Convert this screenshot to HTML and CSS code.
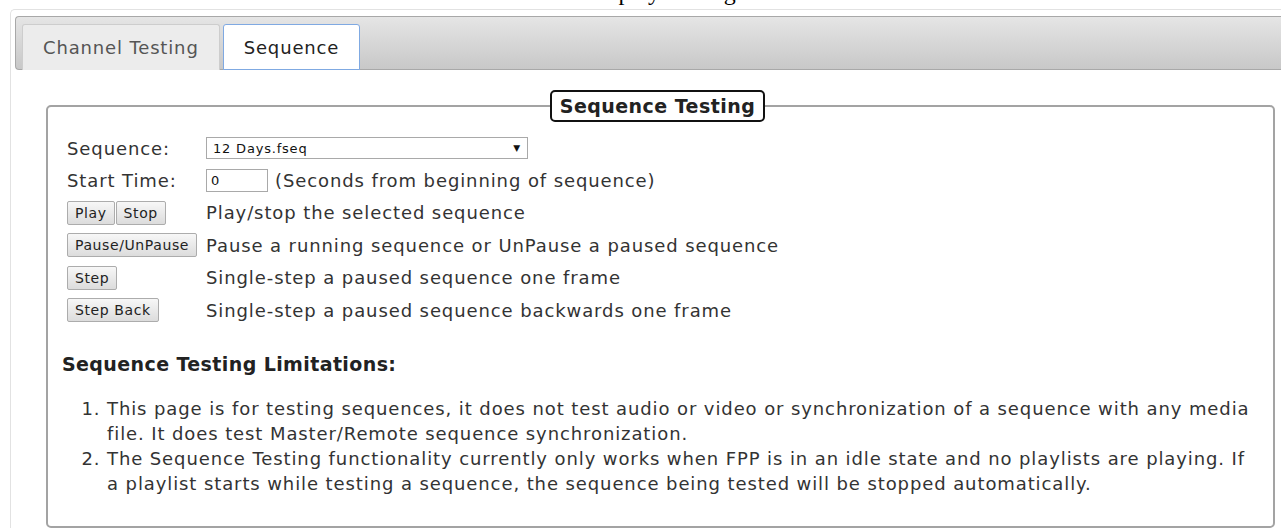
FILE: index.html
```html
<!DOCTYPE html>
<html lang="en">
<head>
  <meta charset="UTF-8" />
  <title>Display Testing</title>
  <link rel="stylesheet" href="styles.css">
</head>
<body>
  <div class="page-title"><span>Display Testing</span></div>

  <div class="tabs-wrap">
    <div class="tab-bar">
      <div class="tab">Channel Testing</div>
      <div class="tab active">Sequence</div>
    </div>

    <div class="tab-panel">
      <fieldset class="testing">
        <legend>Sequence Testing</legend>

        <div class="test-grid">
          <div class="lbl">Sequence:</div>
          <div>
            <div class="fake-select">12 Days.fseq<span class="arrow">&#9660;</span></div>
          </div>

          <div class="lbl">Start Time:</div>
          <div class="inline">
            <input type="text" class="start-time" value="0">
            <span>(Seconds from beginning of sequence)</span>
          </div>

          <div class="btns"><button>Play</button><button>Stop</button></div>
          <div>Play/stop the selected sequence</div>

          <div class="btns"><button>Pause/UnPause</button></div>
          <div>Pause a running sequence or UnPause a paused sequence</div>

          <div class="btns"><button>Step</button></div>
          <div>Single-step a paused sequence one frame</div>

          <div class="btns"><button>Step Back</button></div>
          <div>Single-step a paused sequence backwards one frame</div>
        </div>

        <h3>Sequence Testing Limitations:</h3>
        <ol>
          <li>This page is for testing sequences, it does not test audio or video or synchronization of a sequence with any media file. It does test Master/Remote sequence synchronization.</li>
          <li>The Sequence Testing functionality currently only works when FPP is in an idle state and no playlists are playing. If a playlist starts while testing a sequence, the sequence being tested will be stopped automatically.</li>
        </ol>
      </fieldset>
    </div>
  </div>
</body>
</html>
```

FILE: styles.css
```css
body {
  margin: 0;
  font-family: "DejaVu Sans", Verdana, sans-serif;
  color: #333;
  background: #fff;
  overflow: hidden;
}
.page-title {
  height: 9px;
  overflow: hidden;
  text-align: center;
}
.page-title span {
  display: block;
  margin-top: -21px;
  padding-left: 40px;
  font: 24px/26px "Liberation Serif", serif;
  color: #000;
}
.tabs-wrap {
  margin-left: 10px;
  border: 1px solid #e2e2e2;
  border-right: none;
  border-bottom: none;
  border-radius: 5px 0 0 0;
  padding: 6px 0 0 4px;
}
.tab-bar {
  display: flex;
  align-items: flex-end;
  gap: 3px;
  height: 46px;
  padding: 6px 0 0 6px;
  border: 1px solid #a8a8a8;
  border-right: none;
  border-radius: 4px 0 0 4px;
  background: linear-gradient(#e5e5e5, #c8c8c8);
}
.tab {
  box-sizing: border-box;
  height: 46px;
  margin-bottom: -1px;
  padding: 0 20px;
  display: flex;
  align-items: center;
  font-size: 18px;
  letter-spacing: 0.85px;
  color: #555;
  background: #ececec;
  border: 1px solid #cdcdcd;
  border-bottom: none;
  border-radius: 3px 3px 0 0;
}
.tab.active {
  color: #222;
  background: #fff;
  border: 1px solid #7fa9e2;
  padding: 0 20px;
}
.tab-panel {
  padding: 20px 6px 0 31px;
}
.testing {
  margin: 0;
  padding: 10px 20px 30px 14px;
  border: 2px solid #a3a3a3;
  border-radius: 5px;
}
.testing legend {
  margin: 0 auto;
  padding: 3px 8px;
  border: 2px solid #111;
  border-radius: 5px;
  font-size: 19px;
  font-weight: bold;
  letter-spacing: 0.45px;
  color: #222;
}
.test-grid {
  display: grid;
  grid-template-columns: 139px auto;
  grid-auto-rows: 32.4px;
  align-items: center;
  padding-left: 5px;
  font-size: 18px;
  letter-spacing: 0.9px;
}
.inline {
  display: flex;
  align-items: center;
  gap: 7px;
}
.fake-select {
  box-sizing: border-box;
  width: 322px;
  height: 22px;
  padding: 0 6px;
  display: flex;
  align-items: center;
  justify-content: space-between;
  border: 1px solid #a9a9a9;
  font-size: 13px;
  letter-spacing: 0.8px;
  color: #111;
  background: #fff;
}
.fake-select .arrow {
  font-size: 9px;
}
.start-time {
  box-sizing: border-box;
  width: 62px;
  height: 23px;
  margin: 0;
  padding: 0 4px;
  border: 1px solid #a9a9a9;
  font: 13px "DejaVu Sans", sans-serif;
  color: #111;
}
.btns {
  display: flex;
  white-space: nowrap;
  letter-spacing: 0.6px;
}
button {
  height: 24px;
  margin: 0 1px 0 0;
  padding: 0 7px;
  font: 14px "DejaVu Sans", sans-serif;
  letter-spacing: 0.6px;
  color: #222;
  background: linear-gradient(#f7f7f7, #dcdcdc);
  border: 1px solid #acacac;
  border-radius: 2px;
}
h3 {
  margin: 27px 0 0;
  font-size: 19px;
  letter-spacing: 0.4px;
  color: #222;
}
ol {
  margin: 21px 0 0;
  padding-left: 45px;
  font-size: 18px;
  line-height: 25px;
  letter-spacing: 0.9px;
}
```
